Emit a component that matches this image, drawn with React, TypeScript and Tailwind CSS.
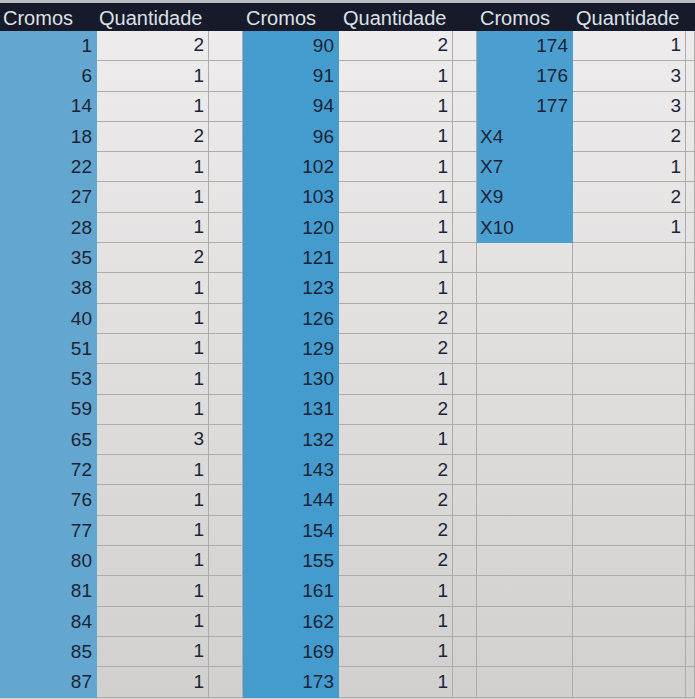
const colA = [1, 6, 14, 18, 22, 27, 28, 35, 38, 40, 51, 53, 59, 65, 72, 76, 77, 80, 81, 84, 85, 87];
const colB = [2, 1, 1, 2, 1, 1, 1, 2, 1, 1, 1, 1, 1, 3, 1, 1, 1, 1, 1, 1, 1, 1];
const colD = [90, 91, 94, 96, 102, 103, 120, 121, 123, 126, 129, 130, 131, 132, 143, 144, 154, 155, 161, 162, 169, 173];
const colE = [2, 1, 1, 1, 1, 1, 1, 1, 1, 2, 2, 1, 2, 1, 2, 2, 2, 2, 1, 1, 1, 1];
const colG = ['174', '176', '177', 'X4', 'X7', 'X9', 'X10'];
const colH = [1, 3, 3, 2, 1, 2, 1];

const rows = Array.from({ length: 22 }, (_, i) => i);

function BlueCell({ value, tone, left }: { value?: string | number; tone: string; left?: boolean }) {
  return (
    <div className={`h-[30.3px] flex items-center ${left ? 'justify-start pl-[3px]' : 'justify-end pr-[5px]'} ${tone}`}>
      {value}
    </div>
  );
}

function GreyCell({ value }: { value?: string | number }) {
  return (
    <div className="h-[30.3px] flex items-center justify-end pr-[4px] border-b border-r border-[#aeabab]">
      {value}
    </div>
  );
}

export default function App() {
  return (
    <div className="w-[695px] h-[699px] overflow-hidden bg-linear-to-b from-[#efeded] to-[#d2cfcf] font-['Liberation_Sans',Arial,sans-serif] text-[19px] text-[#1a2436]">
      {/* header */}
      <div className="grid grid-cols-[97px_112px_34px_96px_114px_24px_96px_113px_1fr] h-[31px] border-t-[3px] border-[#b9bdc2] bg-[#161a2b] text-[#dde1e6] text-[20px] leading-[30px]">
        <div className="pl-[3px]">Cromos</div>
        <div className="pl-[2px]">Quantidade</div>
        <div />
        <div className="pl-[3px]">Cromos</div>
        <div className="pl-[4px]">Quantidade</div>
        <div />
        <div className="pl-[3px]">Cromos</div>
        <div className="pl-[3px] whitespace-nowrap">Quantidade</div>
        <div />
      </div>
      {/* body */}
      <div className="grid grid-cols-[97px_112px_34px_96px_114px_24px_96px_113px_1fr]">
        {rows.map((i) => (
          <div key={i} className="contents">
            <BlueCell value={colA[i]} tone="bg-[#63a6cf]" />
            <GreyCell value={colB[i]} />
            <GreyCell />
            <BlueCell value={colD[i]} tone="bg-[#449cce]" />
            <GreyCell value={colE[i]} />
            <GreyCell />
            {i < colG.length ? (
              <BlueCell value={colG[i]} tone="bg-[#4a9fd0]" left={colG[i].startsWith('X')} />
            ) : (
              <GreyCell />
            )}
            <GreyCell value={colH[i]} />
            <GreyCell />
          </div>
        ))}
      </div>
    </div>
  );
}
